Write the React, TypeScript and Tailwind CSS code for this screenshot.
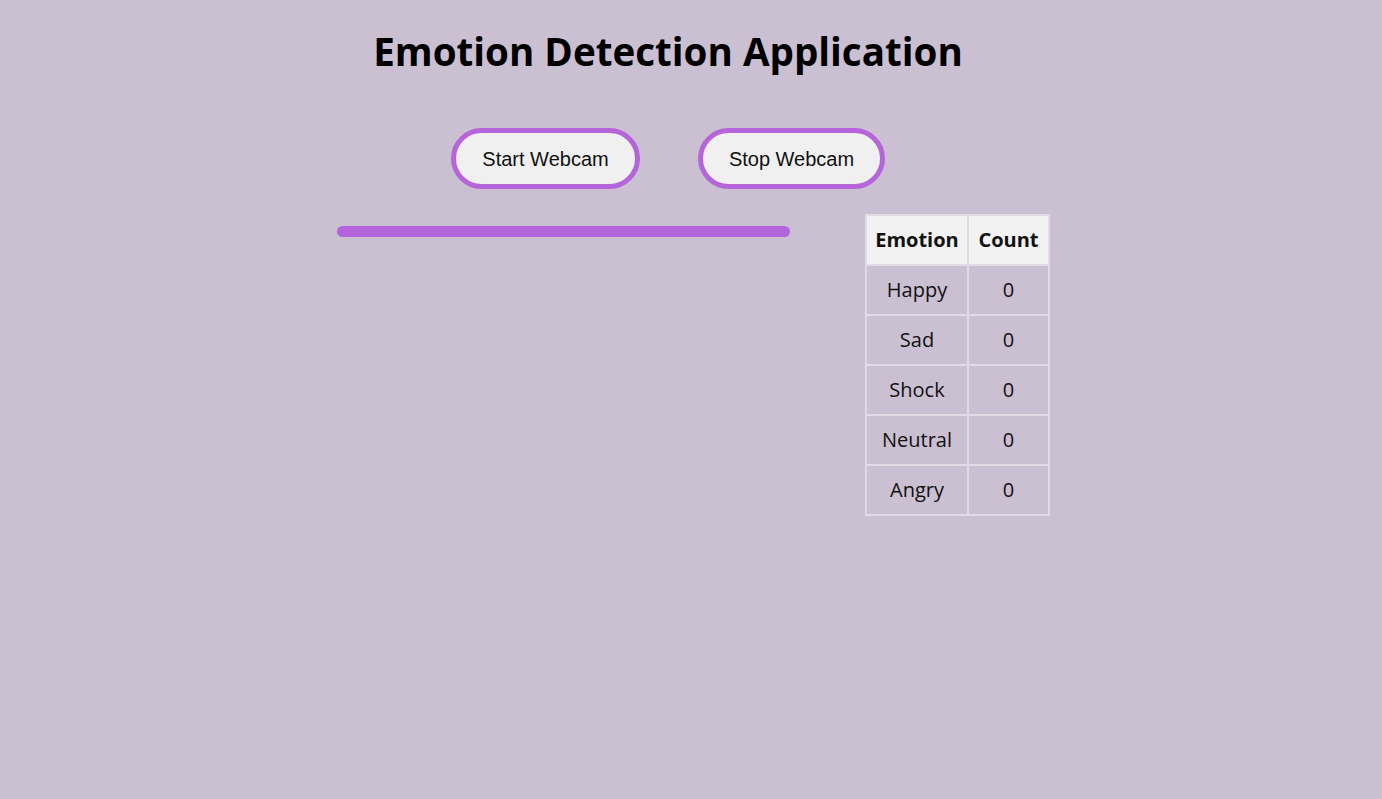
const emotions = ['Happy', 'Sad', 'Shock', 'Neutral', 'Angry'];

export default function App() {
  return (
    <div className="min-h-screen bg-[#cbbfd2] font-['Open_Sans',sans-serif] text-[#111]">
      <div className="pr-[46px] pt-[24px] text-center">
        <h1 className="text-[38.6px] font-bold leading-[54px] text-black">Emotion Detection Application</h1>
        <div className="mt-[50px] flex justify-center gap-[58px] font-['Liberation_Sans',Arial,sans-serif]">
          <button className="h-[61px] w-[189px] rounded-full border-[5px] border-[#b565d9] bg-[#f0f0f0] text-[20px] text-[#111]">
            Start Webcam
          </button>
          <button className="h-[61px] w-[187px] rounded-full border-[5px] border-[#b565d9] bg-[#f0f0f0] text-[20px] text-[#111]">
            Stop Webcam
          </button>
        </div>
      </div>
      <div className="mt-[25px] flex items-start pl-[337px]">
        <div className="mt-[12px] h-[11px] w-[453px] rounded-full bg-[#b565dc]" />
        <table className="ml-[75px] border-collapse text-[20px]">
          <thead>
            <tr>
              <th className="h-[50px] w-[102px] border-2 border-[#e2dbe6] bg-[#f2f2f2] font-bold">Emotion</th>
              <th className="h-[50px] w-[81px] border-2 border-[#e2dbe6] bg-[#f2f2f2] font-bold">Count</th>
            </tr>
          </thead>
          <tbody>
            {emotions.map((e) => (
              <tr key={e}>
                <td className="h-[50px] border-2 border-[#e2dbe6] text-center">{e}</td>
                <td className="h-[50px] border-2 border-[#e2dbe6] text-center">0</td>
              </tr>
            ))}
          </tbody>
        </table>
      </div>
    </div>
  );
}
